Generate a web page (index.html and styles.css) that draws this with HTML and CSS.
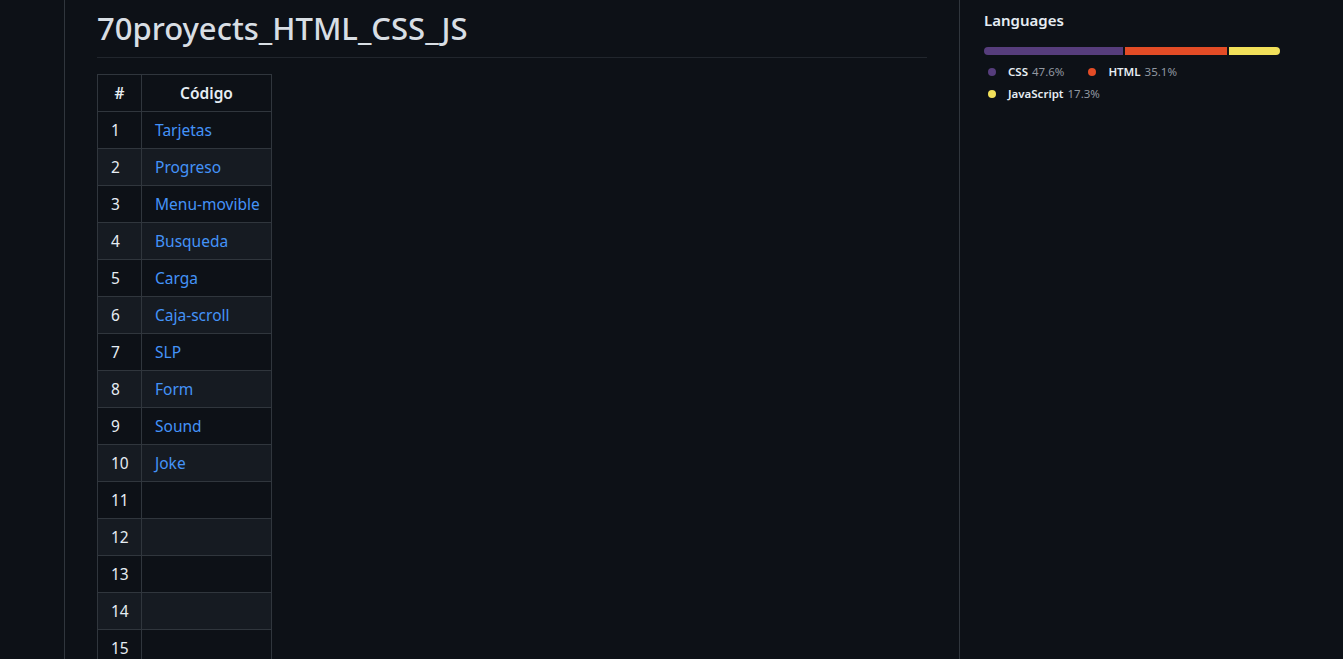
FILE: index.html
```html
<!DOCTYPE html>
<html lang="es">
<head>
<meta charset="utf-8">
<title>70proyects_HTML_CSS_JS</title>
<link rel="stylesheet" href="styles.css">
</head>
<body>
<div class="layout">
  <main class="readme">
    <article class="markdown">
      <h1 class="title">70proyects_HTML_CSS_JS</h1>
      <table class="projects">
        <colgroup><col class="col-num"><col class="col-code"></colgroup>
        <thead>
          <tr><th>#</th><th>Código</th></tr>
        </thead>
        <tbody>
          <tr><td>1</td><td><a href="#">Tarjetas</a></td></tr>
          <tr><td>2</td><td><a href="#">Progreso</a></td></tr>
          <tr><td>3</td><td><a href="#">Menu-movible</a></td></tr>
          <tr><td>4</td><td><a href="#">Busqueda</a></td></tr>
          <tr><td>5</td><td><a href="#">Carga</a></td></tr>
          <tr><td>6</td><td><a href="#">Caja-scroll</a></td></tr>
          <tr><td>7</td><td><a href="#">SLP</a></td></tr>
          <tr><td>8</td><td><a href="#">Form</a></td></tr>
          <tr><td>9</td><td><a href="#">Sound</a></td></tr>
          <tr><td>10</td><td><a href="#">Joke</a></td></tr>
          <tr><td>11</td><td></td></tr>
          <tr><td>12</td><td></td></tr>
          <tr><td>13</td><td></td></tr>
          <tr><td>14</td><td></td></tr>
          <tr><td>15</td><td></td></tr>
        </tbody>
      </table>
    </article>
  </main>
  <aside class="sidebar">
    <h2 class="side-title">Languages</h2>
    <div class="lang-bar">
      <span class="seg css" style="width:47.6%"></span>
      <span class="seg html" style="width:35.1%"></span>
      <span class="seg js" style="width:17.3%"></span>
    </div>
    <ul class="lang-list">
      <li class="lang"><svg class="dot" viewBox="0 0 16 16" width="16" height="16"><circle cx="8" cy="8" r="4" fill="#563d7c"/></svg><span class="lang-name">CSS</span><span class="lang-pct">47.6%</span></li>
      <li class="lang"><svg class="dot" viewBox="0 0 16 16" width="16" height="16"><circle cx="8" cy="8" r="4" fill="#e34c26"/></svg><span class="lang-name">HTML</span><span class="lang-pct">35.1%</span></li>
      <li class="lang"><svg class="dot" viewBox="0 0 16 16" width="16" height="16"><circle cx="8" cy="8" r="4" fill="#f1e05a"/></svg><span class="lang-name">JavaScript</span><span class="lang-pct">17.3%</span></li>
    </ul>
  </aside>
</div>
</body>
</html>
```

FILE: styles.css
```css
html, body {
  margin: 0;
  padding: 0;
  background: #0d1117;
  color: #e6edf3;
  font-family: "Noto Sans", "Open Sans", sans-serif;
  height: 100%;
  overflow: hidden;
}

.layout {
  display: flex;
  height: 659px;
  padding-left: 64px;
}

.readme {
  width: 830px;
  border-left: 1px solid #30363d;
  border-right: 1px solid #30363d;
  padding: 0 32px;
  box-sizing: content-box;
  flex: none;
}

.markdown {
  font-size: 16px;
  line-height: 1.5;
}

.title {
  margin: 8px 0 16px;
  padding-bottom: 9px;
  font-size: 31px;
  font-weight: 500;
  line-height: 40px;
  border-bottom: 1px solid #21262d;
  color: #d8dee4;
  white-space: nowrap;
}

.projects {
  border-collapse: collapse;
  border-spacing: 0;
  table-layout: fixed;
  width: 174px;
  font-size: 15.5px;
}

.col-num { width: 44px; }
.col-code { width: 130px; }

.projects th,
.projects td {
  border: 1px solid #30363d;
  padding: 6px 13px;
  height: 24px;
  line-height: 24px;
  text-align: left;
  white-space: nowrap;
  overflow: hidden;
}

.projects th {
  font-weight: 600;
  text-align: center;
}

.projects tbody tr:nth-child(even) {
  background: #161b22;
}

.projects a {
  color: #4493f8;
  text-decoration: none;
}

.sidebar {
  padding-left: 24px;
  width: 296px;
  flex: none;
}

.side-title {
  margin: 8px 0 0;
  font-size: 15px;
  font-weight: 600;
  line-height: 24px;
}

.lang-bar {
  display: flex;
  gap: 2px;
  height: 8px;
  margin-top: 15px;
  border-radius: 6px;
  overflow: hidden;
}

.seg {
  display: block;
  height: 100%;
}

.css { background: #563d7c; }
.html { background: #e34c26; }
.js { background: #f1e05a; }

.lang-list {
  list-style: none;
  margin: 6px 0 0;
  padding: 0;
  display: flex;
  flex-wrap: wrap;
  column-gap: 20px;
  font-size: 11.5px;
  line-height: 22px;
  width: 240px;
}

.lang {
  display: flex;
  align-items: center;
  height: 22px;
}

.dot {
  margin-right: 8px;
  flex: none;
}

.lang-name {
  font-weight: 600;
  color: #e6edf3;
  margin-right: 4px;
}

.lang-pct {
  color: #9198a1;
}
```
